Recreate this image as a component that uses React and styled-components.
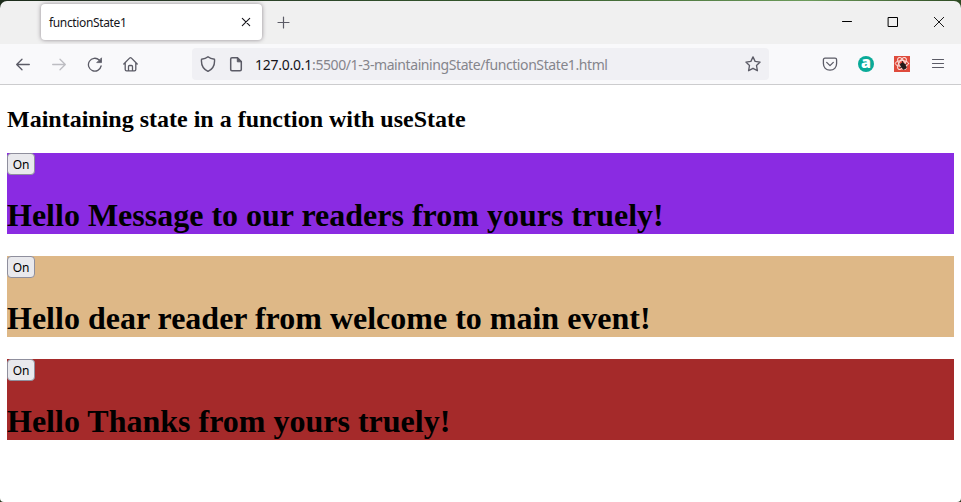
import React from "react";
import styled, { createGlobalStyle } from "styled-components";

const GlobalStyle = createGlobalStyle`
  * { box-sizing: border-box; }
  html, body { margin: 0; padding: 0; background: #27391f; }
  h1, h2 { margin: 0; }
`;

const Window = styled.div`
  height: 502px;
  display: flex;
  flex-direction: column;
  padding-top: 1px;
  background: linear-gradient(90deg, #1c2b1b, #2c4429 30%, #355a2b 55%, #6c9b5a 84%, #2d4a22) top / 100% 12px no-repeat, #27391f;
  overflow: hidden;
`;

const TabBar = styled.header`
  height: 43px;
  flex: none;
  display: flex;
  align-items: flex-start;
  padding: 3px 0 0 41px;
  background: #f0f0f0;
  border-radius: 7px 7px 0 0;
`;

const Tab = styled.div`
  width: 221px;
  height: 36px;
  display: flex;
  align-items: center;
  justify-content: space-between;
  padding: 0 10px 0 8px;
  background: #fff;
  border-radius: 4px;
  box-shadow: 0 0 4px rgba(90, 80, 90, 0.65);
`;

const TabTitle = styled.span`
  padding-top: 2px;
  font: 12px/16px "Noto Sans", sans-serif;
  letter-spacing: -0.36px;
  color: #15141a;
`;

const NewTab = styled.div`
  display: flex;
  margin: 12px 0 0 15px;
`;

const WindowControls = styled.div`
  display: flex;
  gap: 34px;
  margin: 12px 16px 0 auto;
`;

const Toolbar = styled.nav`
  height: 41px;
  flex: none;
  display: flex;
  align-items: center;
  padding: 0 15px;
  background: #f9f9fb;
  border-bottom: 1px solid #ccccce;
`;

const NavButtons = styled.div`
  display: flex;
  gap: 20px;
  width: 177px;
`;

const AddressBar = styled.div`
  width: 577px;
  height: 32px;
  display: flex;
  align-items: center;
  padding: 0 8px;
  background: #f0f0f4;
  border-radius: 4px;
`;

const Icon = styled.svg`
  display: block;
  flex: none;
  width: ${(p) => p.$size || 16}px;
  height: ${(p) => p.$size || 16}px;
  fill: none;
  stroke: ${(p) => p.$color || "#5b5b66"};
  stroke-width: ${(p) => p.$weight || 1.3};
  stroke-linecap: round;
  stroke-linejoin: round;
`;

const PageIcon = styled(Icon)`
  margin: 0 11px 0 12px;
`;

const Url = styled.span`
  flex: 1;
  padding-top: 2px;
  font: 14px/20px "Noto Sans", sans-serif;
  letter-spacing: -0.41px;
  color: #85858c;
  white-space: nowrap;
`;

const Host = styled.span`
  color: #15141a;
  letter-spacing: -0.25px;
`;

const Actions = styled.div`
  display: flex;
  gap: 20px;
  margin-left: auto;
`;

const Badge = styled.span`
  width: 16px;
  height: 16px;
  border-radius: 50%;
  background: #0aaa98;
  color: #fff;
  font: 800 16px/12px "Open Sans", sans-serif;
  text-align: center;
`;

const Content = styled.main`
  flex: 1;
  display: flex;
  flex-direction: column;
  gap: 22px;
  padding: 20px 7px 0;
  background: #fff;
  border-radius: 0 0 4px 4px;
`;

const Heading = styled.h2`
  height: 26px;
  font: bold 24px/29px "Liberation Serif", serif;
  color: #000;
`;

const Panel = styled.section`
  height: 81px;
  display: flex;
  flex-direction: column;
  align-items: flex-start;
  justify-content: space-between;
  background: ${(p) => p.$color};
`;

const Toggle = styled.button`
  width: 28px;
  height: 22px;
  padding: 1px 0 0;
  border: 1px solid #8f8f9d;
  border-radius: 4px;
  background: #e9e9ed;
  color: #000;
  font: 12px/19px "Noto Sans", sans-serif;
  letter-spacing: -0.1px;
`;

const Message = styled.h1`
  font: bold 32px/38px "Liberation Serif", serif;
  color: #000;
`;

const panels = [
  { color: "#8a2be2", text: "Hello Message to our readers from yours truely!" },
  { color: "#deb887", text: "Hello dear reader from welcome to main event!" },
  { color: "#a52a2a", text: "Hello Thanks from yours truely!" },
];

export default function App() {
  return (
    <>
      <GlobalStyle />
      <Window>
        <TabBar>
          <Tab>
            <TabTitle>functionState1</TabTitle>
            <Icon viewBox="0 0 12 12" $size={12} $color="#15141a" $weight={1.1}>
              <path d="M2.3 2.3l7.4 7.4M9.7 2.3L2.3 9.7" />
            </Icon>
          </Tab>
          <NewTab>
            <Icon viewBox="0 0 13 13" $size={13} $weight={1.2}>
              <path d="M6.5 1v11M1 6.5h11" />
            </Icon>
          </NewTab>
          <WindowControls>
            <Icon viewBox="0 0 12 12" $size={12} $color="#000" $weight={1}>
              <path d="M1.5 5.5h9" />
            </Icon>
            <Icon viewBox="0 0 12 12" $size={12} $color="#000" $weight={1}>
              <path d="M1.5 1.5h9v9h-9z" />
            </Icon>
            <Icon viewBox="0 0 12 12" $size={12} $color="#000" $weight={0.9}>
              <path d="M1.3 1.3l9.4 9.4M10.7 1.3l-9.4 9.4" />
            </Icon>
          </WindowControls>
        </TabBar>
        <Toolbar>
          <NavButtons>
            <Icon viewBox="0 0 16 16">
              <path d="M14.3 8.5H1.8M7 3.2L1.7 8.5 7 13.8" />
            </Icon>
            <Icon viewBox="0 0 16 16" $color="#bdbdc2">
              <path d="M1.7 8.5h12.5M9 3.2l5.3 5.3L9 13.8" />
            </Icon>
            <Icon viewBox="0 0 16 16">
              <path d="M12.2 4A6.4 6.4 0 1 0 14.1 10" />
              <path d="M14.5 2.2v4.4h-4.4z" fill="#5b5b66" strokeWidth="0.8" />
            </Icon>
            <Icon viewBox="0 0 16 16">
              <path d="M.8 8L6.800 1.900q.7-.6 1.400 0L14.200 8M2.200 7v6.400q0 1.400 1.400 1.400h7.800q1.400 0 1.400-1.400V7M5.500 14.500v-4q0-1 1-1h2q1 0 1 1v4" />
            </Icon>
          </NavButtons>
          <AddressBar>
            <Icon viewBox="0 0 16 16" $weight={1.4}>
              <path d="M8 .8C6.2 2.4 4 3 1.5 3.2 1 8.6 3 13 8 15.4c5-2.4 7-6.8 6.5-12.2C12 3 9.800 2.400 8 .8z" />
            </Icon>
            <PageIcon viewBox="0 0 16 16" $weight={1.5}>
              <path d="M9.500 1.700H4Q2.700 1.700 2.700 3v10.500q0 1.200 1.300 1.200h8q1.300 0 1.300-1.200v-8z" />
              <path d="M9.300 1.700v4.100h4z" fill="#5b5b66" strokeWidth="1" />
            </PageIcon>
            <Url>
              <Host>127.0.0.1</Host>:5500/1-3-maintainingState/functionState1.html
            </Url>
            <Icon viewBox="0 0 16 16" $weight={1.35}>
              <path d="M8 .9l2.100 4.500 5 .7-3.600 3.400.9 5.200L8 12.300l-4.400 2.400.9-5.200L.9 6.100l5-.7z" />
            </Icon>
          </AddressBar>
          <Actions>
            <Icon viewBox="0 0 16 16">
              <path d="M3 2.200h10q1.600 0 1.600 1.600V7.500C14.600 11.500 12 14.200 8 14.200S1.400 11.500 1.400 7.500V3.800Q1.400 2.200 3 2.200zM4.700 6.400L8 9.600l3.300-3.200" />
            </Icon>
            <Badge>a</Badge>
            <Icon viewBox="0 0 16 16">
              <path d="M0 0h16v16H0z" fill="#df4b3c" stroke="none" />
              <g stroke="#fbe3de" strokeWidth="1">
                <ellipse cx="8" cy="7.500" rx="6.700" ry="2.900" />
                <ellipse cx="8" cy="7.500" rx="6.700" ry="2.900" transform="rotate(60 8 7.500)" />
                <ellipse cx="8" cy="7.500" rx="6.700" ry="2.900" transform="rotate(120 8 7.500)" />
              </g>
              <ellipse cx="9.300" cy="10" rx="2.500" ry="3.700" transform="rotate(-35 9.300 10)" fill="#231c1c" stroke="none" />
              <path d="M5.800 8.200l6.700 3M8.500 5.500l1.200 8M6.500 11.500l5.600-3.500" stroke="#231c1c" strokeWidth="0.9" />
            </Icon>
            <Icon viewBox="0 0 16 16" $weight={1.2}>
              <path d="M2.500 3.500h11M2.500 7.500h11M2.500 11.500h11" />
            </Icon>
          </Actions>
        </Toolbar>
        <Content>
          <Heading>Maintaining state in a function with useState</Heading>
          {panels.map((panel) => (
            <Panel key={panel.color} $color={panel.color}>
              <Toggle>On</Toggle>
              <Message>{panel.text}</Message>
            </Panel>
          ))}
        </Content>
      </Window>
    </>
  );
}
